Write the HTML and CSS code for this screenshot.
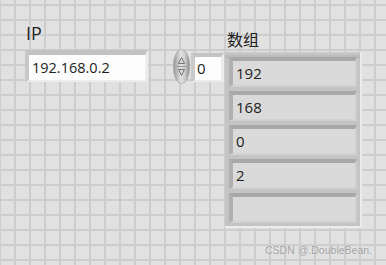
FILE: index.html
```html
<!DOCTYPE html>
<html lang="zh">
<head>
<meta charset="utf-8">
<title>Front Panel</title>
<link rel="stylesheet" href="styles.css">
</head>
<body>
<main class="panel">
  <section class="ctl ctl-ip">
    <div class="label label-ip">IP</div>
    <div class="field field-ip">192.168.0.2</div>
  </section>
  <section class="ctl ctl-index">
    <svg class="spinner" width="17" height="35" viewBox="0 0 17 35" aria-hidden="true">
      <defs>
        <linearGradient id="sg" x1="0" y1="0" x2="1" y2="0">
          <stop offset="0" stop-color="#959595"/>
          <stop offset="0.45" stop-color="#e0e0e0"/>
          <stop offset="0.7" stop-color="#cfcfcf"/>
          <stop offset="1" stop-color="#8a8a8a"/>
        </linearGradient>
      </defs>
      <ellipse cx="8.5" cy="17.5" rx="8.2" ry="17.2" fill="url(#sg)" stroke="#a0a0a0" stroke-width="0.6"/>
      <path d="M8.5 8.5 L5.5 14.5 L11.5 14.5 Z" fill="#dadada" stroke="#6a6a6a" stroke-width="0.9" stroke-linejoin="round"/>
      <line x1="3.5" y1="17.5" x2="13.5" y2="17.5" stroke="#9a9a9a" stroke-width="1"/>
      <path d="M8.5 26.5 L5.5 20.5 L11.5 20.5 Z" fill="#dadada" stroke="#6a6a6a" stroke-width="0.9" stroke-linejoin="round"/>
    </svg>
    <div class="field field-index">0</div>
  </section>
  <section class="ctl ctl-array">
    <div class="label label-array">数组</div>
    <div class="array">
      <div class="cell">192</div>
      <div class="cell">168</div>
      <div class="cell">0</div>
      <div class="cell">2</div>
      <div class="cell"></div>
    </div>
  </section>
</main>
<div class="watermark">CSDN @.DoubleBean.</div>
</body>
</html>
```

FILE: styles.css
```css
html, body {
  margin: 0;
  padding: 0;
}
body {
  width: 386px;
  height: 265px;
  overflow: hidden;
  position: relative;
  background-color: #e1e1e1;
  background-image:
    linear-gradient(to right, #cdcdcd 0, #cdcdcd 2px, transparent 2px),
    linear-gradient(to bottom, #cdcdcd 0, #cdcdcd 2px, transparent 2px);
  background-size: 15px 15px, 15px 15px;
  background-position: -1px 0, 0 4px;
  font-family: "Open Sans", "Noto Sans", "Noto Sans CJK SC", sans-serif;
  color: #1f1f1f;
}
.panel {
  display: flex;
  align-items: flex-start;
  padding-left: 25px;
}
.ctl-ip {
  width: 123px;
  margin-top: 23px;
}
.label {
  height: 21px;
  line-height: 21px;
  white-space: nowrap;
}
.label-ip {
  font-size: 18px;
  padding-left: 1px;
  color: #252525;
}
.field {
  box-sizing: border-box;
  background: #fdfdfd;
  white-space: nowrap;
}
.field-ip {
  margin-top: 6px;
  height: 32px;
  line-height: 25px;
  font-size: 14.5px;
  border-style: solid;
  border-width: 5px 3px 2px 4px;
  border-color: #c2c2c2 #ededed #ededed #c8c8c8;
  padding-left: 3px;
}
.ctl-index {
  display: flex;
  align-items: flex-start;
  margin-left: 25px;
  margin-top: 49px;
}
.spinner {
  display: block;
  flex: none;
}
.field-index {
  margin-left: 1px;
  margin-top: 4px;
  width: 33px;
  height: 29px;
  line-height: 23px;
  font-size: 15px;
  border-style: solid;
  border-width: 4px 3px 2px 4px;
  border-color: #c4c4c4 #ececec #ececec #cacaca;
  padding-left: 2px;
}
.ctl-array {
  margin-left: 1px;
  margin-top: 29px;
}
.label-array {
  font-family: "Noto Sans CJK SC", "Noto Sans", sans-serif;
  font-size: 16px;
  height: 20px;
  line-height: 20px;
  padding-left: 2px;
  color: #222;
}
.array {
  box-sizing: border-box;
  margin-top: 3px;
  width: 137px;
  height: 176px;
  padding: 5px 3px 3px 4px;
  background: #c4c4c4;
  background-image: linear-gradient(to bottom, #cdcdcd 0, #b8b8b8 5px, #c4c4c4 7px);
  border-right: 2px solid #ebebeb;
  border-bottom: 2px solid #ebebeb;
  display: flex;
  flex-direction: column;
  gap: 4px;
}
.cell {
  box-sizing: border-box;
  height: 30px;
  border-style: solid;
  border-width: 4px 2px 2px 4px;
  border-color: #a8a8a8 #cfcfcf #d2d2d2 #b0b0b0;
  background: #dadada;
  font-size: 15px;
  line-height: 24px;
  padding-left: 3px;
  color: #222;
}
.watermark {
  position: absolute;
  right: 14px;
  bottom: 8px;
  font-family: "Liberation Sans", "Open Sans", sans-serif;
  font-size: 10.5px;
  line-height: 13px;
  color: #a2a2a2;
  text-shadow: 0 0 1px #f4f4f4;
}
```
